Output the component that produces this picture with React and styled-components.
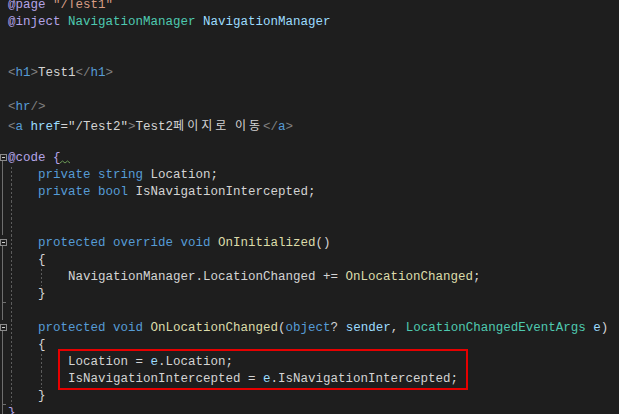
import React from 'react';
import styled, { createGlobalStyle } from 'styled-components';

const GlobalStyle = createGlobalStyle`
  html, body {
    margin: 0;
    padding: 0;
    background: #1e1e1e;
    overflow: hidden;
  }
`;

const colors = {
  dir: '#b4a4e8',
  kw: '#569cd6',
  type: '#4ec9b0',
  fn: '#dcdcaa',
  var: '#9cdcfe',
  str: '#d69d85',
  punct: '#808080',
  tag: '#569cd6',
  text: '#d4d4d4',
};

// each line: fold marker in gutter, indent guides (columns), tokens
const lines = [
  { t: [['dir', '@page '], ['str', '"/Test1"']] },
  { t: [['dir', '@inject '], ['type', 'NavigationManager '], ['var', 'NavigationManager']] },
  { t: [] },
  { t: [] },
  { t: [['punct', '<'], ['tag', 'h1'], ['punct', '>'], ['text', 'Test1'], ['punct', '</'], ['tag', 'h1'], ['punct', '>']] },
  { t: [] },
  { t: [['punct', '<'], ['tag', 'hr'], ['punct', '/>']] },
  {
    t: [['punct', '<'], ['tag', 'a '], ['var', 'href'], ['text', '='], ['text', '"/Test2"'], ['punct', '>'],
      ['text', 'Test2'], ['ko', '페이지로 이동'], ['punct', '</'], ['tag', 'a'], ['punct', '>']],
  },
  { t: [] },
  { fold: 'open', t: [['dir', '@code {']], squiggle: true },
  { fold: 'bar', g: [0], t: [['text', '    '], ['kw', 'private string '], ['text', 'Location;']] },
  { fold: 'bar', g: [0], t: [['text', '    '], ['kw', 'private bool '], ['text', 'IsNavigationIntercepted;']] },
  { fold: 'bar', g: [0], t: [] },
  { fold: 'bar', g: [0], t: [] },
  { fold: 'open', g: [0], t: [['text', '    '], ['kw', 'protected override void '], ['fn', 'OnInitialized'], ['text', '()']] },
  { fold: 'bar', g: [0], t: [['text', '    {']] },
  { fold: 'bar', g: [0, 4], t: [['text', '        NavigationManager.LocationChanged += '], ['fn', 'OnLocationChanged'], ['text', ';']] },
  { fold: 'end', g: [0], t: [['text', '    }']] },
  { fold: 'bar', g: [0], t: [] },
  {
    fold: 'open', g: [0],
    t: [['text', '    '], ['kw', 'protected void '], ['fn', 'OnLocationChanged'], ['text', '('], ['kw', 'object'], ['text', '? '],
      ['var', 'sender'], ['text', ', '], ['type', 'LocationChangedEventArgs '], ['var', 'e'], ['text', ')']],
  },
  { fold: 'bar', g: [0], t: [['text', '    {']] },
  { fold: 'bar', g: [0, 4], t: [['text', '        Location = '], ['var', 'e'], ['text', '.Location;']] },
  { fold: 'bar', g: [0, 4], t: [['text', '        IsNavigationIntercepted = '], ['var', 'e'], ['text', '.IsNavigationIntercepted;']] },
  { fold: 'end', g: [0], t: [['text', '    }']] },
  { fold: 'bar', t: [['dir', '}']] },
];

const CHAR = 7.5;

const Editor = styled.div`
  position: relative;
  width: 619px;
  height: 414px;
  overflow: hidden;
  background: #1e1e1e;
  font-family: "Liberation Mono", "Noto Sans CJK KR", monospace;
  font-size: 12.5px;
`;

const Lines = styled.div`
  display: flex;
  flex-direction: column;
  margin-top: -3px;
`;

const Line = styled.div`
  position: relative;
  display: flex;
  height: 17px;
  line-height: 17px;
`;

const Gutter = styled.div`
  position: relative;
  width: 8px;
  flex: none;

  &::before {
    content: '';
    position: absolute;
    left: 2px;
    top: ${(p) => (p.$fold === 'open' ? '11px' : '0')};
    bottom: 0;
    width: 1px;
    background: ${(p) => (p.$fold ? '#6e6e6e' : 'transparent')};
  }

  &::after {
    content: '';
    position: absolute;
    left: 2px;
    bottom: 0;
    width: 4px;
    height: 1px;
    background: ${(p) => (p.$fold === 'end' ? '#6e6e6e' : 'transparent')};
  }
`;

const FoldBox = styled.span`
  position: absolute;
  left: 0;
  top: 4px;
  width: 5px;
  height: 5px;
  border: 1px solid #8a8a8a;
  background: #1e1e1e;
  z-index: 1;

  &::after {
    content: '';
    position: absolute;
    left: 1px;
    top: 2px;
    width: 3px;
    height: 1px;
    background: #cfcfcf;
  }
`;

const Code = styled.div`
  position: relative;
  white-space: pre;
  color: ${colors.text};
`;

const Tok = styled.span`
  color: ${(p) => colors[p.$kind] || colors.text};
`;

const Korean = styled.span`
  font-family: "Noto Sans CJK KR", sans-serif;
  font-size: 12px;
  letter-spacing: 3px;
  color: ${colors.text};
`;

const Guide = styled.span`
  position: absolute;
  top: 0;
  bottom: 0;
  width: 1px;
  background-image: linear-gradient(to bottom, #5c5c5c 50%, transparent 50%);
  background-size: 1px 4px;
`;

const Squiggle = styled.svg`
  position: absolute;
  left: 52px;
  top: 10px;
`;

const Highlight = styled.div`
  position: absolute;
  left: 58px;
  top: 349px;
  width: 406px;
  height: 37px;
  border: 2px solid #e60000;
  pointer-events: none;
`;

const App = () => {
  return (
    <Editor>
      <GlobalStyle />
      <Lines>
        {lines.map((line, i) => (
          <Line key={i}>
            <Gutter $fold={line.fold}>{line.fold === 'open' && <FoldBox />}</Gutter>
            <Code>
              {(line.g || []).map((col) => (
                <Guide key={col} style={{ left: col * CHAR + 3 }} />
              ))}
              {line.t.length === 0 && ' '}
              {line.t.map(([kind, text], j) =>
                kind === 'ko' ? <Korean key={j}>{text}</Korean> : <Tok key={j} $kind={kind}>{text}</Tok>
              )}
              {line.squiggle && (
                <Squiggle width="10" height="4" viewBox="0 0 10 4">
                  <path d="M0 3 L2.5 1 L5 3 L7.5 1 L10 3" stroke="#6a9955" strokeWidth="1" fill="none" />
                </Squiggle>
              )}
            </Code>
          </Line>
        ))}
      </Lines>
      <Highlight />
    </Editor>
  );
};

export default App;
